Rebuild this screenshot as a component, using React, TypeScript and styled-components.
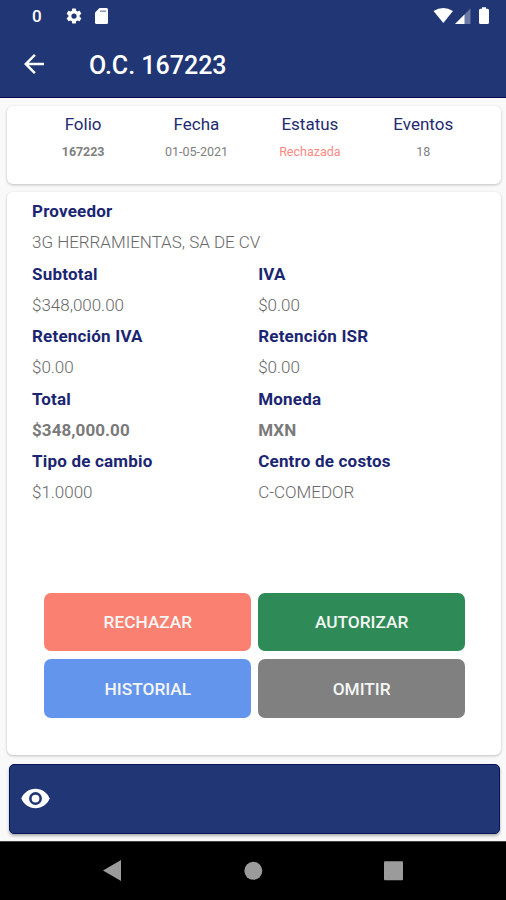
import React from "react";
import styled, { createGlobalStyle } from "styled-components";

const Global = createGlobalStyle`
  * { box-sizing: border-box; }
  body { margin: 0; background: #f9f9fa; font-family: Roboto, "Liberation Sans", sans-serif; }
`;

const Screen = styled.div`
  width: 506px;
  height: 900px;
  display: flex;
  flex-direction: column;
  overflow: hidden;
  background: #f9f9fa;
`;

const Header = styled.header`
  height: 98px;
  flex: none;
  background: #213674;
  border-bottom: 1px solid #08094f;
  color: #fff;
`;

const StatusBar = styled.div`
  height: 31px;
  display: flex;
  align-items: center;
  padding: 0 15px 0 32px;
`;

const StatusIcons = styled.div`
  display: flex;
  align-items: center;
  gap: 12px;
`;

const Clock = styled.span`
  width: 33px;
  font-size: 17px;
  font-weight: 500;
  line-height: 32px;
`;

const Spacer = styled.div`
  flex: 1;
`;

const Toolbar = styled.div`
  height: 66px;
  display: flex;
  align-items: center;
  padding-left: 19px;
`;

const BackButton = styled.button`
  width: 70px;
  height: 30px;
  padding: 0;
  border: 0;
  background: none;
  color: #fff;
  display: flex;
`;

const Title = styled.h1`
  margin: 0;
  padding-top: 4px;
  font-size: 25px;
  font-weight: 500;
  line-height: 30px;
  white-space: nowrap;
`;

const Content = styled.main`
  flex: 1;
  display: flex;
  flex-direction: column;
  gap: 8px;
  padding: 8px 5px 0 7px;
`;

const Card = styled.section`
  background: #fff;
  border-radius: 6px;
  box-shadow: 0 1px 3px rgba(0, 0, 0, 0.24);
`;

const Summary = styled(Card)`
  height: 78px;
  display: grid;
  grid-template-columns: repeat(4, 113.4px);
  justify-content: start;
  padding: 5px 0 0 19.4px;
  text-align: center;
`;

const SummaryLabel = styled.div`
  color: #232c6e;
  font-size: 17px;
  line-height: 27px;
`;

const SummaryValue = styled.div<{ $tone?: string; $strong?: boolean }>`
  color: ${(p) => p.$tone ?? "#808080"};
  font-size: 12.5px;
  font-weight: ${(p) => (p.$strong ? 700 : 400)};
  line-height: 27px;
  letter-spacing: ${(p) => (p.$strong ? "-0.1px" : "0")};
`;

const Details = styled(Card)`
  height: 563px;
  display: flex;
  flex-direction: column;
  padding: 4px 25px 0;
`;

const Fields = styled.dl`
  margin: 0;
  height: 396.5px;
  display: grid;
  grid-template-columns: 226.2px 1fr;
  grid-auto-rows: 62.55px;
  align-content: start;
`;

const Field = styled.div<{ $wide?: boolean }>`
  grid-column: ${(p) => (p.$wide ? "1 / -1" : "auto")};
`;

const FieldLabel = styled.dt`
  height: 31.3px;
  line-height: 31.3px;
  color: #1b2672;
  font-size: 17px;
  font-weight: 700;
  letter-spacing: 0.2px;
`;

const FieldValue = styled.dd<{ $strong?: boolean }>`
  margin: 0;
  height: 31.3px;
  line-height: 31.3px;
  color: ${(p) => (p.$strong ? "#7a7a7a" : "#686868")};
  font-size: 17px;
  font-weight: ${(p) => (p.$strong ? 700 : 300)};
  letter-spacing: ${(p) => (p.$strong ? "0.08px" : "-0.02px")};
`;

const Actions = styled.div`
  display: grid;
  grid-template-columns: 207px 206.5px;
  grid-auto-rows: 58.5px;
  gap: 8px 7px;
  padding-left: 12.4px;
`;

const Action = styled.button<{ $color: string }>`
  border: 0;
  border-radius: 7px;
  padding: 1px 0 0;
  background: ${(p) => p.$color};
  color: #f4f6f4;
  font-family: inherit;
  font-size: 17.3px;
  font-weight: 500;
`;

const Preview = styled.button`
  height: 70px;
  margin: 1px 1.5px 0 2px;
  padding: 0 0 2px 10px;
  border: 1px solid #08145c;
  border-radius: 5px;
  background: #213674;
  color: #fff;
  display: flex;
  align-items: center;
  box-shadow: 0 2px 3px rgba(0, 0, 0, 0.3);
`;

const NavBar = styled.nav`
  height: 59px;
  flex: none;
  background: #000;
  border-top: 1px solid #444;
  display: grid;
  grid-template-columns: repeat(3, 140.5px);
  justify-content: center;
  justify-items: center;
  padding-top: 17px;
`;

const summary = [
  { label: "Folio", value: "167223", strong: true },
  { label: "Fecha", value: "01-05-2021" },
  { label: "Estatus", value: "Rechazada", tone: "#f98a85" },
  { label: "Eventos", value: "18" },
];

const fields = [
  { label: "Proveedor", value: "3G HERRAMIENTAS, SA DE CV", wide: true },
  { label: "Subtotal", value: "$348,000.00" },
  { label: "IVA", value: "$0.00" },
  { label: "Retención IVA", value: "$0.00" },
  { label: "Retención ISR", value: "$0.00" },
  { label: "Total", value: "$348,000.00", strong: true },
  { label: "Moneda", value: "MXN", strong: true },
  { label: "Tipo de cambio", value: "$1.0000" },
  { label: "Centro de costos", value: "C-COMEDOR" },
];

const actions = [
  { label: "RECHAZAR", color: "#fa8072" },
  { label: "AUTORIZAR", color: "#2e8b57" },
  { label: "HISTORIAL", color: "#6495ed" },
  { label: "OMITIR", color: "#808080" },
];

const GearIcon = () => (
  <svg width="18" height="18" viewBox="0 0 24 24" fill="currentColor">
    <path d="M19.43 12.98c.04-.32.07-.64.07-.98s-.03-.66-.07-.98l2.11-1.65c.19-.15.24-.42.12-.64l-2-3.46c-.12-.22-.39-.3-.61-.22l-2.49 1c-.52-.4-1.08-.73-1.69-.98l-.38-2.65C14.46 2.18 14.25 2 14 2h-4c-.25 0-.46.18-.49.42l-.38 2.65c-.61.25-1.17.59-1.69.98l-2.49-1c-.23-.09-.49 0-.61.22l-2 3.46c-.13.22-.07.49.12.64l2.11 1.65c-.04.32-.07.65-.07.98s.03.66.07.98l-2.11 1.65c-.19.15-.24.42-.12.64l2 3.46c.12.22.39.3.61.22l2.49-1c.52.4 1.08.73 1.69.98l.38 2.65c.03.24.24.42.49.42h4c.25 0 .46-.18.49-.42l.38-2.65c.61-.25 1.17-.59 1.69-.98l2.49 1c.23.09.49 0 .61-.22l2-3.46c.12-.22.07-.49-.12-.64l-2.11-1.65zM12 15.5A3.5 3.5 0 1 1 12 8.500a3.500 3.500 0 0 1 0 7z" />
  </svg>
);

const SdCardIcon = () => (
  <svg width="13" height="16" viewBox="0 0 13 16">
    <path d="M4.500 0H11.500Q13 0 13 1.500V14.500Q13 16 11.500 16H1.500Q0 16 0 14.500V4.500Z" fill="#fff" />
    <path d="M5 3.200H11" stroke="#8f9bbd" strokeWidth="1.600" />
  </svg>
);

const SignalIcons = () => (
  <svg width="58" height="20" viewBox="0 0 58 20">
    <path d="M0.500 5Q10.200 -1.200 20 5L10.300 17Z" fill="#fff" />
    <path d="M37.500 2.500V18H22Z" fill="#6c7ba6" />
    <path d="M31.500 8.500V18H22Z" fill="#fff" />
    <path d="M49 1.300h4v1.500h1.500q1.500 0 1.500 1.500v12.200q0 1.500-1.500 1.500h-7q-1.500 0-1.500-1.500V4.300q0-1.500 1.500-1.500H49Z" fill="#fff" />
  </svg>
);

const BackArrow = () => (
  <svg width="30" height="30" viewBox="0 0 24 24" fill="currentColor">
    <path d="M20 11H7.830l5.590-5.590L12 4l-8 8 8 8 1.410-1.410L7.830 13H20z" />
  </svg>
);

const EyeIcon = () => (
  <svg width="31" height="31" viewBox="0 0 24 24" fill="currentColor">
    <path d="M12 4.500C7 4.500 2.730 7.610 1 12c1.730 4.390 6 7.500 11 7.500s9.270-3.110 11-7.500c-1.730-4.390-6-7.500-11-7.500zM12 17a5 5 0 1 1 0-10 5 5 0 0 1 0 10zm0-8a3 3 0 1 0 0 6 3 3 0 0 0 0-6z" />
  </svg>
);

export default function App() {
  return (
    <Screen>
      <Global />
      <Header>
        <StatusBar>
          <Clock>0</Clock>
          <StatusIcons>
            <GearIcon />
            <SdCardIcon />
          </StatusIcons>
          <Spacer />
          <SignalIcons />
        </StatusBar>
        <Toolbar>
          <BackButton aria-label="Volver">
            <BackArrow />
          </BackButton>
          <Title>O.C. 167223</Title>
        </Toolbar>
      </Header>
      <Content>
        <Summary>
          {summary.map((s) => (
            <div key={s.label}>
              <SummaryLabel>{s.label}</SummaryLabel>
              <SummaryValue $tone={s.tone} $strong={s.strong}>
                {s.value}
              </SummaryValue>
            </div>
          ))}
        </Summary>
        <Details>
          <Fields>
            {fields.map((f) => (
              <Field key={f.label} $wide={f.wide}>
                <FieldLabel>{f.label}</FieldLabel>
                <FieldValue $strong={f.strong}>{f.value}</FieldValue>
              </Field>
            ))}
          </Fields>
          <Actions>
            {actions.map((a) => (
              <Action key={a.label} $color={a.color}>
                {a.label}
              </Action>
            ))}
          </Actions>
        </Details>
        <Preview aria-label="Ver">
          <EyeIcon />
        </Preview>
      </Content>
      <NavBar>
        <svg width="20" height="22" viewBox="0 0 20 22">
          <path d="M0 11.500L18 1V22Z" fill="#9b9b9b" />
        </svg>
        <svg width="20" height="22" viewBox="0 0 20 22">
          <circle cx="10.300" cy="11.800" r="9" fill="#9b9b9b" />
        </svg>
        <svg width="20" height="22" viewBox="0 0 20 22">
          <rect x="0" y="2.300" width="19" height="19" rx="1" fill="#9b9b9b" />
        </svg>
      </NavBar>
    </Screen>
  );
}
